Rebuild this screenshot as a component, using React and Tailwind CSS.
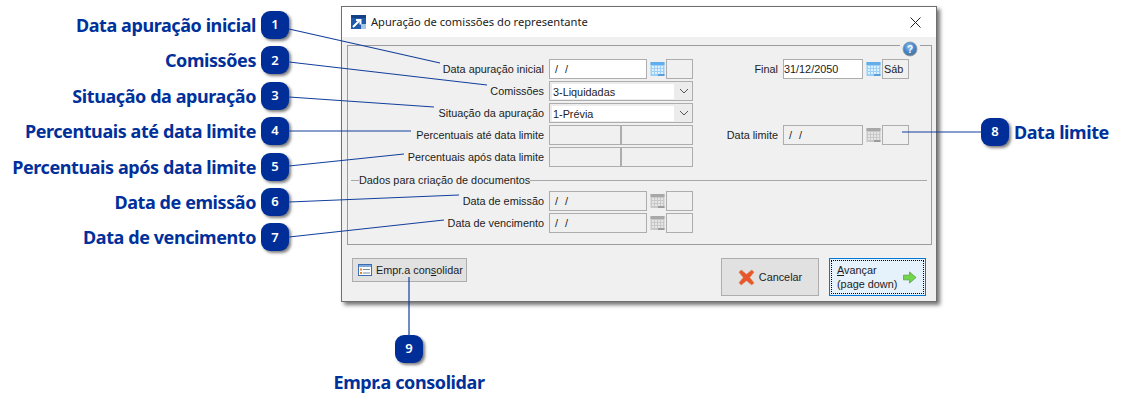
import React from 'react';

const LEFT_CALLOUTS = [
    'Data apuração inicial',
    'Comissões',
    'Situação da apuração',
    'Percentuais até data limite',
    'Percentuais após data limite',
    'Data de emissão',
    'Data de vencimento',
];

// leader lines from the badges to the form fields
const LEADERS = [
    [289, 29, 440, 63],
    [289, 62, 487, 85],
    [289, 97, 434, 107],
    [289, 131, 411, 131],
    [289, 166, 404, 154],
    [289, 202, 459, 195],
    [289, 237, 444, 220],
    [902, 132, 982, 132],
    [409, 277, 409, 336],
];

const UI_FONT = 'font-["Liberation_Sans",Arial,sans-serif] text-[10.85px] text-[#1c1c1c]';

const Badge = ({ n }) => (
    <div className="w-[28px] h-[28px] shrink-0 rounded-[9px] bg-[#002e98] text-white text-[13px] font-semibold flex items-center justify-center shadow-[2px_2px_3px_rgba(0,0,0,0.5)]">
        {n}
    </div>
);

const CalloutText = ({ children }) => (
    <span className="text-[18px] leading-[24px] font-bold text-[#00309a] whitespace-nowrap tracking-[-0.42px]">{children}</span>
);

const CalendarIcon = ({ disabled }) => {
    const top = disabled ? '#a8a8a8' : '#62aeea';
    const body = disabled ? '#c8c8c8' : '#9ccff6';
    const cell = disabled ? '#e6e6e6' : '#dff1ff';
    const foot = disabled ? '#9c9c9c' : '#5a9fdc';
    const cols = [2, 5, 8, 11];
    const rows = [5, 8, 11];
    return (
        <svg width="15" height="16" viewBox="0 0 15 16" className="shrink-0">
            <rect x="0.5" y="1" width="14" height="14" fill={body} />
            <rect x="0.5" y="1" width="14" height="3" fill={top} />
            {cols.map((x) => rows.map((y) => <rect key={`${x}-${y}`} x={x} y={y} width="2" height="2" fill={cell} />))}
            <rect x="8" y="13" width="6.5" height="2" fill={foot} />
        </svg>
    );
};

const Field = ({ w, value, disabled, slashes }) => (
    <div className={`${w} h-[20px] border border-[#adadad] flex items-center pt-[1px] ${UI_FONT} ${disabled ? 'bg-[#f0f0f0]' : 'bg-white'}`}>
        {slashes ? <span className="pl-[5px] whitespace-pre tracking-[0.33px]">/  /</span> : <span className="pl-[0px]">{value}</span>}
    </div>
);

const Combo = ({ value }) => (
    <div className="w-[144px] h-[20px] border border-[#adadad] bg-[#ececec] flex items-center">
        <div className={`w-[122px] h-[15px] ml-[2px] bg-white leading-[16px] pl-[1px] ${UI_FONT}`}>{value}</div>
        <svg width="10" height="6" viewBox="0 0 10 6" className="ml-[5px]">
            <path d="M1 1 L5 5 L9 1" fill="none" stroke="#555" strokeWidth="1" />
        </svg>
    </div>
);

const Label = ({ w, children }) => (
    <div className={`${w} shrink-0 text-right whitespace-nowrap pr-[5px] pt-[1px] ${UI_FONT}`}>{children}</div>
);

const DateField = ({ w, value, disabled, day }) => (
    <>
        <Field w={w} value={value} disabled={disabled} slashes={!value} />
        <div className="w-[3px]" />
        <CalendarIcon disabled={disabled} />
        <div className="w-[1px]" />
        <div className={`w-[27px] h-[20px] border border-[#adadad] bg-[#f0f0f0] leading-[19px] pl-[1px] ${UI_FONT}`}>{day}</div>
    </>
);

const Row = ({ label, children, className = '' }) => (
    <div className={`flex items-center h-[20px] ${className}`}>
        <Label w="w-[201px]">{label}</Label>
        {children}
    </div>
);

const HelpIcon = () => (
    <svg width="16" height="16" viewBox="0 0 16 16">
        <defs>
            <radialGradient id="help" cx="45%" cy="35%" r="65%">
                <stop offset="0%" stopColor="#9cc8ee" />
                <stop offset="60%" stopColor="#3f84cc" />
                <stop offset="100%" stopColor="#5b6f86" />
            </radialGradient>
        </defs>
        <circle cx="8" cy="8" r="7" fill="url(#help)" stroke="#8a9aa8" strokeWidth="0.8" />
        <text x="8" y="11.5" textAnchor="middle" fontSize="10" fontWeight="700" fontFamily="Liberation Sans, sans-serif" fill="#fff">?</text>
    </svg>
);

const Percent = () => (
    <>
        <div className="w-[72px] h-[20px] border border-[#adadad] bg-[#f0f0f0]" />
        <div className="w-[72px] h-[20px] border border-[#adadad] bg-[#f0f0f0]" />
    </>
);

const App = () => {
    return (
        <div className='relative w-[1125px] h-[410px] bg-white overflow-hidden flex font-["Noto_Sans","Open_Sans",sans-serif]'>
            {/* Left callouts */}
            <div className="w-[289px] shrink-0 pt-[11px] flex flex-col gap-[7.4px]">
                {LEFT_CALLOUTS.map((text, i) => (
                    <div key={text} className="flex items-center justify-end gap-[5px] h-[28px]">
                        <CalloutText>{text}</CalloutText>
                        <Badge n={i + 1} />
                    </div>
                ))}
            </div>

            {/* Dialog and bottom callout */}
            <div className="ml-[52px] w-[596px] shrink-0 flex flex-col">
                <div className="mt-[6px] h-[296px] border border-[#6f6f6f] bg-[#f0f0f0] shadow-[3px_3px_4px_rgba(0,0,0,0.55)] flex flex-col">
                    {/* Title bar */}
                    <div className="h-[30px] shrink-0 bg-white flex items-center pl-[9px] pr-[15px]">
                        <svg width="15" height="14" viewBox="0 0 15 14" className="shrink-0">
                            <rect width="15" height="14" fill="#1f5aa8" />
                            <rect y="0" width="15" height="3" fill="#123f86" />
                            <path d="M2 12 L8 6 M5 5 H9.5 V9.5" fill="none" stroke="#fff" strokeWidth="2" />
                            <rect x="10" y="9" width="5" height="5" fill="#a8c4e4" />
                        </svg>
                        <span className="ml-[5px] text-[11.15px] text-[#222] flex-1">Apuração de comissões do representante</span>
                        <svg width="11" height="11" viewBox="0 0 11 11">
                            <path d="M0.5 0.5 L10.5 10.5 M10.5 0.5 L0.5 10.5" stroke="#222" strokeWidth="1" />
                        </svg>
                    </div>

                    {/* Group box */}
                    <div className="relative ml-[5px] mt-[8px] w-[585px] h-[200px] shrink-0 border border-[#9c9c9c] pt-[13px]">
                        <div className="absolute right-[11px] -top-[5px] w-[20px] h-[16px] bg-[#f0f0f0] flex justify-center">
                            <HelpIcon />
                        </div>
                        <div className="flex flex-col gap-[2px]">
                            <Row label="Data apuração inicial">
                                <DateField w="w-[98px]" />
                                <Label w="w-[90px]">Final</Label>
                                <DateField w="w-[80px]" value="31/12/2050" day="Sáb" />
                            </Row>
                            <Row label="Comissões"><Combo value="3-Liquidadas" /></Row>
                            <Row label="Situação da apuração"><Combo value="1-Prévia" /></Row>
                            <Row label="Percentuais até data limite">
                                <Percent />
                                <Label w="w-[90px]">Data limite</Label>
                                <DateField w="w-[80px]" disabled />
                            </Row>
                            <Row label="Percentuais após data limite"><Percent /></Row>
                        </div>
                        <div className="flex items-center h-[16px] mt-[5px] mb-[3px] pl-[3px] pr-[4px]">
                            <div className="w-[8px] h-px bg-[#a8a8a8]" />
                            <span className={`whitespace-nowrap ${UI_FONT}`}>Dados para criação de documentos</span>
                            <div className="flex-1 h-px bg-[#a8a8a8]" />
                        </div>
                        <div className="flex flex-col gap-[2px]">
                            <Row label="Data de emissão"><DateField w="w-[98px]" disabled /></Row>
                            <Row label="Data de vencimento"><DateField w="w-[98px]" disabled /></Row>
                        </div>
                    </div>

                    {/* Footer buttons */}
                    <div className="flex items-start pl-[10px] pt-[13px]">
                        <div className={`w-[115px] h-[24px] border border-[#adadad] bg-[#e1e1e1] flex items-center pl-[5px] ${UI_FONT}`}>
                            <svg width="14" height="12" viewBox="0 0 14 12" className="shrink-0">
                                <rect x="0.5" y="0.5" width="13" height="11" fill="#fff" stroke="#3c6fb0" />
                                <rect x="1" y="1" width="12" height="2" fill="#7fa8dc" />
                                <rect x="2" y="4.5" width="2" height="2" fill="#e8842c" />
                                <rect x="2" y="8" width="2" height="2" fill="#e8842c" />
                                <rect x="5" y="5" width="7" height="1" fill="#7a8aa0" />
                                <rect x="5" y="8.5" width="7" height="1" fill="#7a8aa0" />
                            </svg>
                            <span className="ml-[4px] whitespace-nowrap">Empr.a con<span className="underline">s</span>olidar</span>
                        </div>
                        <div className={`ml-[254px] w-[98px] h-[38px] border border-[#adadad] bg-[#e1e1e1] flex items-center justify-center ${UI_FONT}`}>
                            <svg width="17" height="17" viewBox="0 0 16 16" className="shrink-0">
                                <path d="M1 3 L3 1 L8 5 L13 1 L15 3 L11 8 L15 13 L13 15 L8 11 L3 15 L1 13 L5 8 Z" fill="#e8562c" stroke="#d8804c" strokeWidth="0.6" />
                            </svg>
                            <span className="ml-[4px]">Cancelar</span>
                        </div>
                        <div className="ml-[10px] w-[97px] h-[38px] border border-[#0078d7] bg-[#e5f1fb] p-[1px]">
                            <div className={`w-full h-full border border-dotted border-black flex items-center pl-[5px] leading-[14px] ${UI_FONT}`}>
                                <div className="flex-1 whitespace-nowrap">
                                    <div><span className="underline">A</span>vançar</div>
                                    <div>(page down)</div>
                                </div>
                                <svg width="14" height="13" viewBox="0 0 15 13" className="shrink-0 mr-[6px]">
                                    <path d="M0.5 4 H7 V0.5 L14 6.5 L7 12.5 V9 H0.5 Z" fill="#6fd84a" stroke="#5a9a3c" strokeWidth="0.8" />
                                </svg>
                            </div>
                        </div>
                    </div>
                </div>

                {/* Bottom callout */}
                <div className="w-[136px] mt-[33px] flex flex-col items-center gap-[7px]">
                    <Badge n={9} />
                    <CalloutText>Empr.a consolidar</CalloutText>
                </div>
            </div>

            {/* Right callout */}
            <div className="ml-[44px] mt-[118px] h-[28px] flex items-center gap-[5px]">
                <Badge n={8} />
                <CalloutText>Data limite</CalloutText>
            </div>

            {/* Leader lines over the dialog */}
            <svg width="1125" height="410" className="absolute left-0 top-0 pointer-events-none">
                {LEADERS.map(([x1, y1, x2, y2]) => (
                    <line key={`${x1}-${y1}`} x1={x1} y1={y1} x2={x2} y2={y2} stroke="#123f9c" strokeWidth="1.2" />
                ))}
            </svg>
        </div>
    );
};

export default App;
